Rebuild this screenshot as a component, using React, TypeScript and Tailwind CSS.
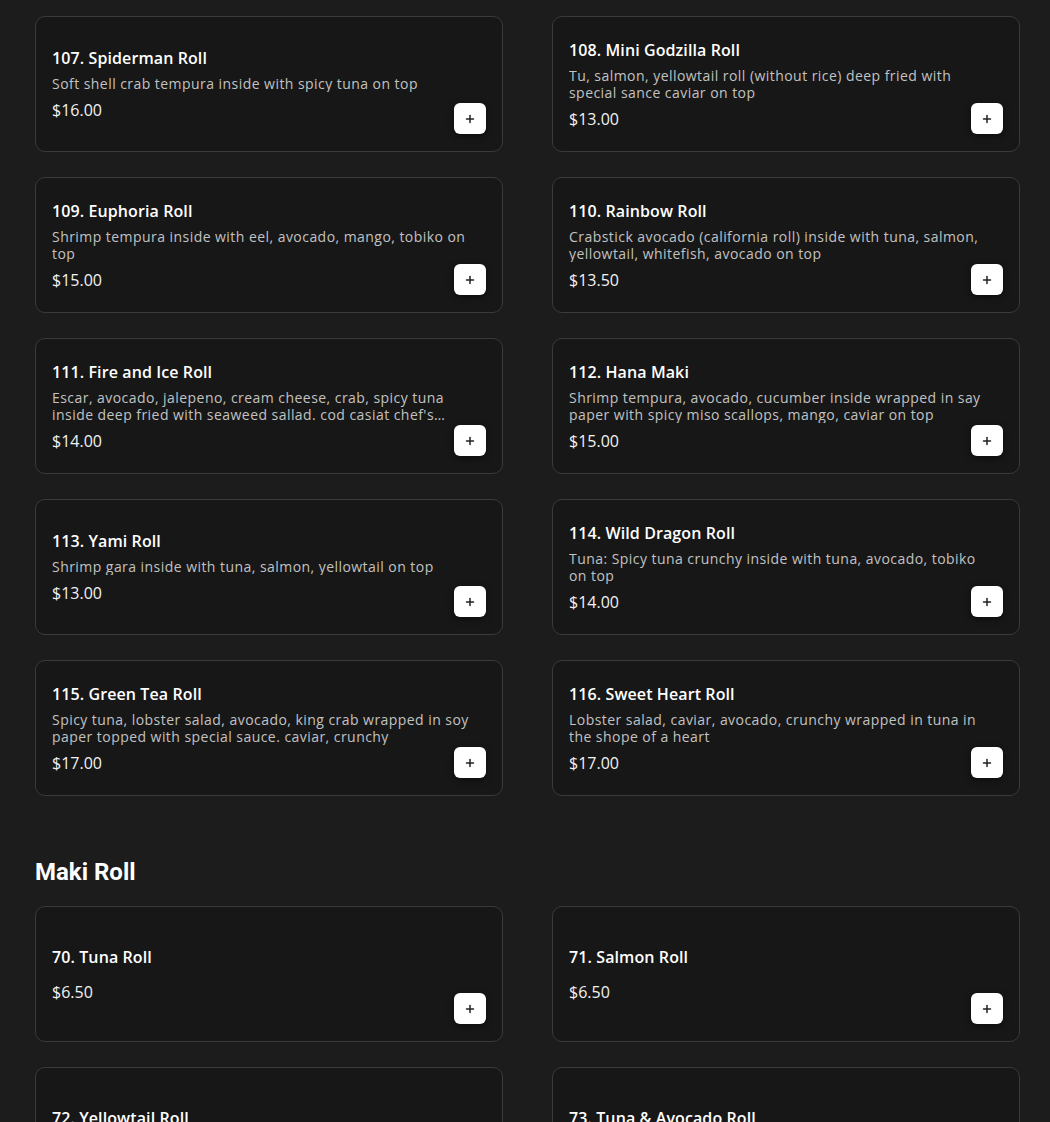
import { Plus } from 'lucide-react';

type MenuItem = {
  name: string;
  description?: string;
  price: string;
};

const specialRolls: MenuItem[] = [
  { name: '107. Spiderman Roll', description: 'Soft shell crab tempura inside with spicy tuna on top', price: '$16.00' },
  {
    name: '108. Mini Godzilla Roll',
    description: 'Tu, salmon, yellowtail roll (without rice) deep fried with special sance caviar on top',
    price: '$13.00',
  },
  { name: '109. Euphoria Roll', description: 'Shrimp tempura inside with eel, avocado, mango, tobiko on top', price: '$15.00' },
  {
    name: '110. Rainbow Roll',
    description: 'Crabstick avocado (california roll) inside with tuna, salmon, yellowtail, whitefish, avocado on top',
    price: '$13.50',
  },
  {
    name: '111. Fire and Ice Roll',
    description:
      "Escar, avocado, jalepeno, cream cheese, crab, spicy tuna inside deep fried with seaweed sallad. cod casiat chef's special sauce on top",
    price: '$14.00',
  },
  {
    name: '112. Hana Maki',
    description: 'Shrimp tempura, avocado, cucumber inside wrapped in say paper with spicy miso scallops, mango, caviar on top',
    price: '$15.00',
  },
  { name: '113. Yami Roll', description: 'Shrimp gara inside with tuna, salmon, yellowtail on top', price: '$13.00' },
  {
    name: '114. Wild Dragon Roll',
    description: 'Tuna: Spicy tuna crunchy inside with tuna, avocado, tobiko on top',
    price: '$14.00',
  },
  {
    name: '115. Green Tea Roll',
    description: 'Spicy tuna, lobster salad, avocado, king crab wrapped in soy paper topped with special sauce. caviar, crunchy',
    price: '$17.00',
  },
  {
    name: '116. Sweet Heart Roll',
    description: 'Lobster salad, caviar, avocado, crunchy wrapped in tuna in the shope of a heart',
    price: '$17.00',
  },
];

const makiRolls: MenuItem[] = [
  { name: '70. Tuna Roll', price: '$6.50' },
  { name: '71. Salmon Roll', price: '$6.50' },
  { name: '72. Yellowtail Roll', price: '$6.50' },
  { name: '73. Tuna & Avocado Roll', price: '$6.50' },
];

function ItemCard({ item }: { item: MenuItem }) {
  return (
    <div className="relative h-[136px] rounded-[10px] border border-[#3a3a3a] bg-[#171717] pl-4 pr-[26px] flex items-center">
      <div className="flex-1 min-w-0">
        <div className="text-[16px] leading-6 font-semibold tracking-[0.1px] text-white">{item.name}</div>
        <div className="mt-[5px] text-[14px] leading-[17px] tracking-[0.45px] text-[#c2c2c2] line-clamp-2">
          {item.description}
        </div>
        <div className="mt-[6px] text-[16px] leading-6 text-[#f2f2f2]">{item.price}</div>
      </div>
      <button className="absolute right-[16px] bottom-[17px] w-8 h-[31px] rounded-md bg-white shadow-[0_2px_6px_rgba(0,0,0,0.5)] flex items-center justify-center">
        <Plus className="w-3 h-3 text-[#222]" strokeWidth={3} />
      </button>
    </div>
  );
}

export default function App() {
  return (
    <div
      className="min-h-screen bg-[#1c1c1c] pt-4 pb-10"
      style={{ fontFamily: '"Open Sans", "Noto Sans", sans-serif' }}
    >
      <div className="w-[985px] ml-[35px]">
        <div className="grid grid-cols-2 gap-x-[49px] gap-y-[25px]">
          {specialRolls.map(item => (
            <ItemCard key={item.name} item={item} />
          ))}
        </div>

        <h2 className="mt-[60px] mb-[18px] text-[24px] leading-8 font-bold text-white font-['Roboto',sans-serif]">
          Maki Roll
        </h2>

        <div className="grid grid-cols-2 gap-x-[49px] gap-y-[25px]">
          {makiRolls.map(item => (
            <ItemCard key={item.name} item={item} />
          ))}
        </div>
      </div>
    </div>
  );
}
